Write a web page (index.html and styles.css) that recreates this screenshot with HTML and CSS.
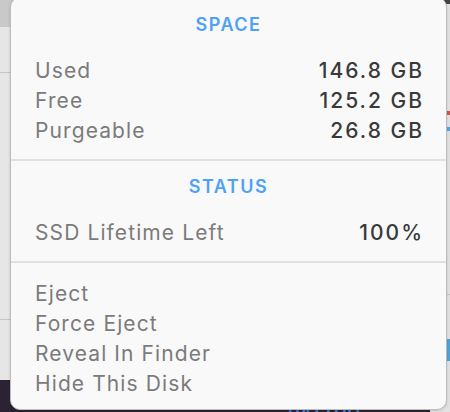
FILE: index.html
```html
<!DOCTYPE html>
<html>
<head>
<meta charset="utf-8">
<link rel="stylesheet" href="styles.css">
</head>
<body>
<div class="desktop">
  <div class="bg-left">
    <div class="bg-left-top"></div>
    <div class="bg-left-mid"></div>
    <div class="bg-left-low"></div>
  </div>
  <div class="bg-right">
    <div class="r-dark"></div>
    <div class="r-red"></div>
    <div class="r-blue"></div>
    <div class="r-line"></div>
    <div class="r-blue2"></div>
  </div>
  <div class="bg-bottom-text">DATTOO</div>

  <div class="popover">
    <section class="section first">
      <h2 class="heading">SPACE</h2>
      <div class="row"><span class="label">Used</span><span class="value">146.8 GB</span></div>
      <div class="row"><span class="label">Free</span><span class="value">125.2 GB</span></div>
      <div class="row"><span class="label">Purgeable</span><span class="value">26.8 GB</span></div>
    </section>
    <section class="section">
      <h2 class="heading">STATUS</h2>
      <div class="row"><span class="label">SSD Lifetime Left</span><span class="value">100%</span></div>
    </section>
    <section class="section actions">
      <div class="row"><span class="label">Eject</span></div>
      <div class="row"><span class="label">Force Eject</span></div>
      <div class="row"><span class="label">Reveal In Finder</span></div>
      <div class="row"><span class="label">Hide This Disk</span></div>
    </section>
  </div>
</div>
</body>
</html>
```

FILE: styles.css
```css
* { box-sizing: border-box; }
html, body { margin: 0; padding: 0; }
body {
  width: 450px;
  height: 412px;
  overflow: hidden;
  background: #e4e4e4;
  font-family: "Inter", "Noto Sans", sans-serif;
}
.desktop {
  position: relative;
  width: 450px;
  height: 412px;
  background: #2b2333;
}
.bg-left {
  position: absolute;
  left: 0;
  top: 0;
  width: 30px;
  height: 380px;
  background: #e6e6e6;
  border-bottom-right-radius: 8px;
  border-right: 1px solid #d0d0d0;
}
.bg-left-top { height: 27px; background: #c9c9c9; }
.bg-left-mid { margin-top: 45px; height: 1px; background: #c6c6c6; }
.bg-left-low { margin-top: 246px; height: 1px; background: #c6c6c6; }
.bg-right {
  position: absolute;
  right: 0;
  top: 0;
  width: 20px;
  height: 412px;
  background: #e2e2e2;
}
.r-dark { height: 4px; background: #444; }
.r-red { margin-top: 107px; height: 4px; background: #d9534f; }
.r-blue { margin-top: 12px; height: 4px; background: #5aa6e0; }
.r-line { margin-top: 163px; height: 1px; background: #c6c6c6; }
.r-blue2 { margin-top: 44px; height: 22px; background: #4fa3d9; }
.bg-bottom-text {
  position: absolute;
  left: 288px;
  top: 404px;
  font-size: 16px;
  line-height: 16px;
  font-weight: 700;
  color: #3d7fd0;
  letter-spacing: 1px;
}

.popover {
  position: absolute;
  left: 10px;
  top: -3px;
  width: 437px;
  height: 413px;
  background: #f9f9f9;
  border: 1px solid #bcbcbc;
  border-radius: 10px;
  box-shadow: 0 1px 3px rgba(0,0,0,0.15);
  display: flex;
  flex-direction: column;
}
.section {
  padding: 11px 24px 13px 24px;
  border-bottom: 2px solid #e0e0e0;
}
.section.first { padding-top: 12px; }
.section.actions { border-bottom: none; padding-top: 16px; }
.heading {
  margin: 0 0 16px 0;
  height: 30px;
  line-height: 30px;
  text-align: center;
  font-size: 18px;
  font-weight: 600;
  color: #4ea1f6;
  letter-spacing: 1.5px;
}
.row {
  display: flex;
  justify-content: space-between;
  align-items: center;
  height: 30px;
  line-height: 30px;
  font-size: 21px;
}
.label { color: #7b7b7b; letter-spacing: 1.1px; }
.value { color: #3a3a3a; font-weight: 500; letter-spacing: 2px; margin-right: -2px; }
```
